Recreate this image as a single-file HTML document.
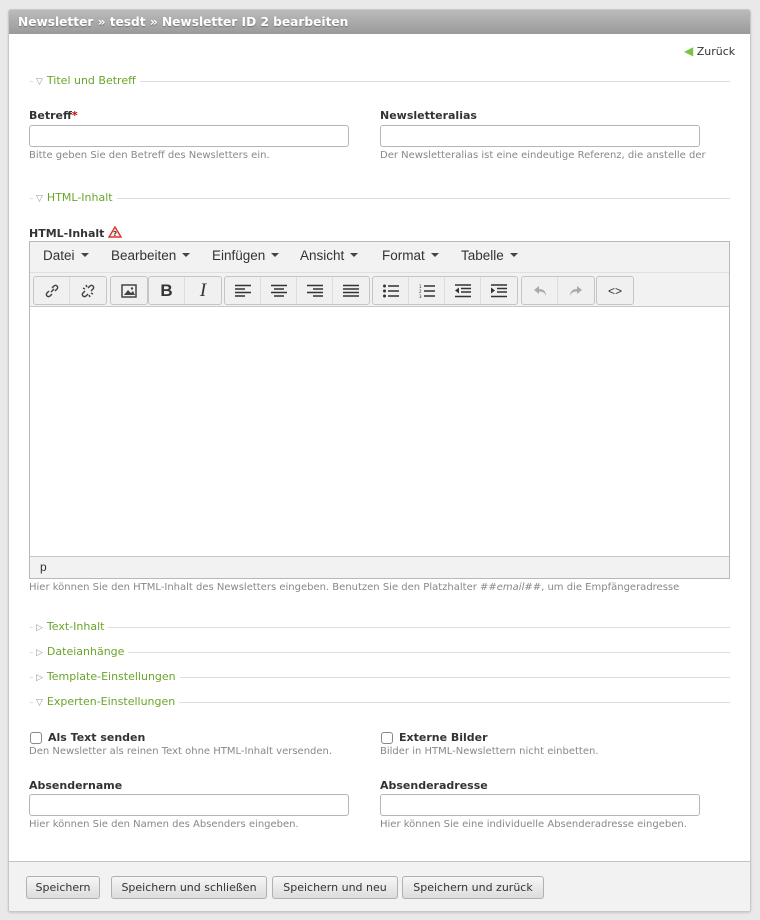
<!DOCTYPE html>
<html><head><meta charset="utf-8"><style>
*{box-sizing:border-box;margin:0;padding:0}
body{width:760px;height:920px;background:#e9e9e9;font-family:"DejaVu Sans","Liberation Sans",sans-serif;position:relative;overflow:hidden;color:#333}
.a{position:absolute}
#panel{left:8px;top:9px;width:743px;height:903px;background:#fff;border:1px solid #c8c8c8;border-radius:3px;box-shadow:0 1px 2px rgba(0,0,0,.15)}
#hdr{left:9px;top:10px;width:741px;height:24px;background:linear-gradient(#bbb,#9a9a9a);color:#fff;font-weight:bold;font-size:12.2px;line-height:24px;padding-left:9px;text-shadow:0 1px 1px rgba(0,0,0,.3);border-radius:2px 2px 0 0}
.lg{font-size:11px;color:#6aa52a;left:30px;width:700px;height:14px}
.lg:before{content:"";position:absolute;left:0;right:0;top:7px;border-top:1px solid #ddd}
.lg span{position:relative;background:#fff;padding:0 4px 0 3px;margin-left:3px}
.lg i{font-style:normal;color:#999;font-size:9px;margin-right:4px}
.lb{font-size:11px;font-weight:bold;color:#333}
.in{width:320px;height:22px;border:1px solid #b5b5b5;border-radius:3px;background:#fff}
.hl{font-size:10px;color:#888;white-space:nowrap}
.mn{font-family:"Liberation Sans",sans-serif;font-size:13.5px;color:#333;top:248px}
.mn:after{content:"";display:inline-block;margin-left:6px;border:4px solid transparent;border-top:4px solid #444;border-bottom:0;vertical-align:3px}
.gp{top:276px;height:29px;border:1px solid #c5c5c5;border-radius:3px;background:#f0f0f0;display:flex}
.gp div{width:36px;height:27px;border-right:1px solid #ddd;display:flex;align-items:center;justify-content:center}
.gp div:last-child{border-right:0}
.btn{top:876px;height:23px;border:1px solid #b0b0b0;border-radius:3px;background:linear-gradient(#f6f6f6,#dcdcdc);font-size:11px;line-height:21px;text-align:center;color:#333}
.cb{width:12px;height:12px;border:1px solid #888;border-radius:3px;background:#fff}
</style></head><body>
<div class="a" id="panel"></div>
<div class="a" id="hdr">Newsletter » tesdt » Newsletter ID 2 bearbeiten</div>
<div class="a" style="left:684px;top:44px;font-size:11px;color:#333"><span style="color:#7cc242;font-size:12px">◀</span> Zurück</div>

<div class="a lg" style="top:74px"><span><i>▽</i>Titel und Betreff</span></div>
<div class="a lb" style="left:29px;top:109px">Betreff<span style="color:#c00">*</span></div>
<div class="a in" style="left:29px;top:125px"></div>
<div class="a hl" style="left:29px;top:150px">Bitte geben Sie den Betreff des Newsletters ein.</div>
<div class="a lb" style="left:380px;top:109px">Newsletteralias</div>
<div class="a in" style="left:380px;top:125px"></div>
<div class="a hl" style="left:380px;top:150px;width:340px;overflow:hidden">Der Newsletteralias ist eine eindeutige Referenz, die anstelle der</div>

<div class="a lg" style="top:191px"><span><i>▽</i>HTML-Inhalt</span></div>
<div class="a lb" style="left:29px;top:226px">HTML-Inhalt <svg width="14" height="12" viewBox="0 0 14 12" style="vertical-align:-1px"><path d="M7 1L13 11H1Z" fill="#fde9e0" stroke="#d33" stroke-width="1.4"/><text x="7" y="10" font-size="7" text-anchor="middle" fill="#333" font-weight="bold">?</text></svg></div>

<div class="a" style="left:29px;top:241px;width:701px;height:338px;border:1px solid #b8b8b8;background:#fff"></div>
<div class="a" style="left:30px;top:242px;width:699px;height:65px;background:#f2f2f2;border-bottom:1px solid #c8c8c8"></div>
<div class="a" style="left:30px;top:272px;width:699px;border-top:1px solid #e0e0e0"></div>
<div class="a mn" style="left:43px">Datei</div>
<div class="a mn" style="left:111px">Bearbeiten</div>
<div class="a mn" style="left:212px">Einfügen</div>
<div class="a mn" style="left:300px">Ansicht</div>
<div class="a mn" style="left:382px">Format</div>
<div class="a mn" style="left:461px">Tabelle</div>

<div class="a gp" style="left:33px"><div><svg width="16" height="16" viewBox="0 0 16 16" fill="none" stroke="#444" stroke-width="1.5"><path d="M7 9l3-3M5 8l-2 2a2 2 0 003 3l2-2M11 8l2-2a2 2 0 00-3-3L8 5"/></svg></div><div><svg width="16" height="16" viewBox="0 0 16 16" fill="none" stroke="#444" stroke-width="1.5"><path d="M5 8l-2 2a2 2 0 003 3l2-2M11 8l2-2a2 2 0 00-3-3L8 5M3 5l2 1M6 2l1 2M13 11l-2-1M10 14l-1-2"/></svg></div></div>
<div class="a gp" style="left:110px"><div><svg width="16" height="14" viewBox="0 0 16 14"><rect x="1" y="1" width="14" height="12" fill="none" stroke="#444" stroke-width="1.5"/><path d="M3 11l4-5 3 3 2-2 2 4z" fill="#444"/><circle cx="11" cy="4.5" r="1.2" fill="#444"/></svg></div></div>
<div class="a gp" style="left:148px"><div style="font-family:'Liberation Sans';font-weight:bold;font-size:17px;color:#333">B</div><div style="font-family:'Liberation Serif';font-style:italic;font-size:19px;color:#333">I</div></div>
<div class="a gp" style="left:224px"><div><svg width="16" height="14"><path d="M0 1.5h16M0 5h10M0 8.5h16M0 12h10" stroke="#333" stroke-width="1.6"/></svg></div><div><svg width="16" height="14"><path d="M0 1.5h16M3 5h10M0 8.5h16M3 12h10" stroke="#333" stroke-width="1.6"/></svg></div><div><svg width="16" height="14"><path d="M0 1.5h16M6 5h10M0 8.5h16M6 12h10" stroke="#333" stroke-width="1.6"/></svg></div><div><svg width="16" height="14"><path d="M0 1.5h16M0 5h16M0 8.5h16M0 12h16" stroke="#333" stroke-width="1.6"/></svg></div></div>
<div class="a gp" style="left:372px"><div><svg width="16" height="14"><path d="M5 2h11M5 7h11M5 12h11" stroke="#333" stroke-width="1.6"/><circle cx="1.5" cy="2" r="1.5" fill="#333"/><circle cx="1.5" cy="7" r="1.5" fill="#333"/><circle cx="1.5" cy="12" r="1.5" fill="#333"/></svg></div><div><svg width="16" height="14"><path d="M5 2h11M5 7h11M5 12h11" stroke="#333" stroke-width="1.6"/><text x="0" y="4" font-size="4" fill="#333">1</text><text x="0" y="9" font-size="4" fill="#333">2</text><text x="0" y="14" font-size="4" fill="#333">3</text></svg></div><div><svg width="16" height="14"><path d="M0 1h16M6 4.5h10M6 8h10M0 12.5h16" stroke="#333" stroke-width="1.6"/><path d="M0 6.5l4-3v6z" fill="#333"/></svg></div><div><svg width="16" height="14"><path d="M0 1h16M6 4.5h10M6 8h10M0 12.5h16" stroke="#333" stroke-width="1.6"/><path d="M4 6.5l-4-3v6z" fill="#333"/></svg></div></div>
<div class="a gp" style="left:521px"><div><svg width="14" height="12"><path d="M6 1L1 5l5 4V6.5c4 0 6 1.5 7 4.5 0-5-3-7-7-7z" fill="#aaa"/></svg></div><div><svg width="14" height="12"><path d="M8 1l5 4-5 4V6.5c-4 0-6 1.5-7 4.5 0-5 3-7 7-7z" fill="#aaa"/></svg></div></div>
<div class="a gp" style="left:596px"><div style="font-size:12px;color:#333;font-family:'Liberation Sans'">&lt;&gt;</div></div>

<div class="a" style="left:30px;top:556px;width:699px;height:22px;background:#f2f2f2;border-top:1px solid #c8c8c8;font-size:12px;font-family:'Liberation Sans';padding:3px 0 0 10px">p</div>
<div class="a hl" style="left:29px;top:582px">Hier können Sie den HTML-Inhalt des Newsletters eingeben. Benutzen Sie den Platzhalter <i>##email##</i>, um die Empfängeradresse</div>

<div class="a lg" style="top:620px"><span><i>▷</i>Text-Inhalt</span></div>
<div class="a lg" style="top:645px"><span><i>▷</i>Dateianhänge</span></div>
<div class="a lg" style="top:670px"><span><i>▷</i>Template-Einstellungen</span></div>
<div class="a lg" style="top:695px"><span><i>▽</i>Experten-Einstellungen</span></div>

<div class="a cb" style="left:30px;top:732px"></div>
<div class="a lb" style="left:48px;top:731px">Als Text senden</div>
<div class="a hl" style="left:29px;top:746px">Den Newsletter als reinen Text ohne HTML-Inhalt versenden.</div>
<div class="a cb" style="left:381px;top:732px"></div>
<div class="a lb" style="left:399px;top:731px">Externe Bilder</div>
<div class="a hl" style="left:380px;top:746px">Bilder in HTML-Newslettern nicht einbetten.</div>

<div class="a lb" style="left:29px;top:779px">Absendername</div>
<div class="a in" style="left:29px;top:794px"></div>
<div class="a hl" style="left:29px;top:819px">Hier können Sie den Namen des Absenders eingeben.</div>
<div class="a lb" style="left:380px;top:779px">Absenderadresse</div>
<div class="a in" style="left:380px;top:794px"></div>
<div class="a hl" style="left:380px;top:819px">Hier können Sie eine individuelle Absenderadresse eingeben.</div>

<div class="a" style="left:9px;top:861px;width:741px;height:50px;background:#f2f2f2;border-top:1px solid #c4c4c4;border-radius:0 0 3px 3px"></div>
<div class="a btn" style="left:26px;width:74px">Speichern</div>
<div class="a btn" style="left:111px;width:156px">Speichern und schließen</div>
<div class="a btn" style="left:272px;width:126px">Speichern und neu</div>
<div class="a btn" style="left:402px;width:142px">Speichern und zurück</div>
</body></html>
